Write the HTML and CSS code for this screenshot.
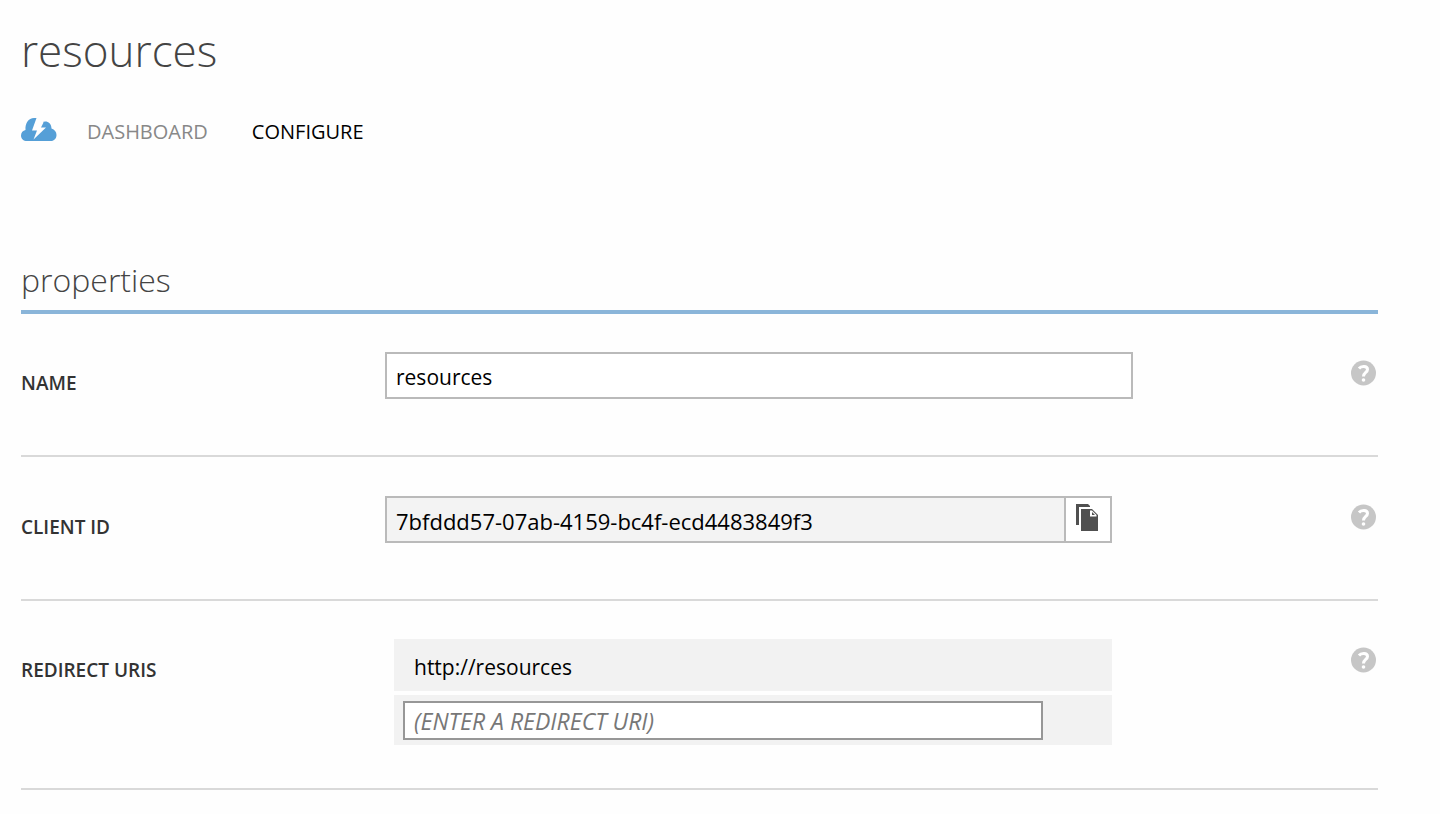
FILE: index.html
```html
<!DOCTYPE html>
<html lang="en">
<head>
    <meta charset="UTF-8">
    <meta name="viewport" content="width=device-width, initial-scale=1.0">
    <title>resources</title>
    <link rel="stylesheet" href="styles.css">
</head>
<body>
    <header>
        <h1>resources</h1>
        <nav class="tabs">
            <a href="#" class="cloud" aria-label="Quick start">
                <svg width="36" height="24" viewBox="0 0 36 24">
                    <path fill="#559fd7" d="M6 23C2.500 23 0 21 0 17.500C0 14.500 2 12.500 4.500 12C4 5 7.500 0 13 0H17.500L19 8L21 4.500C24.500 2 30.500 4 30.500 10.500C33.500 11.500 35.500 14 35.500 17C35.500 20.500 33 23 30 23Z"/>
                    <path fill="#fefefe" d="M15.500 0L11 12.500H16L12.500 21.500L25 9.500H20L22.500 4.500L19 0Z"/>
                </svg>
            </a>
            <a href="#">DASHBOARD</a>
            <a href="#" class="active">CONFIGURE</a>
        </nav>
    </header>

    <main>
        <h2>properties</h2>
        <form>
            <div class="row">
                <label for="name">NAME</label>
                <input type="text" id="name" class="text-box" value="resources">
                <button type="button" class="help" aria-label="Help">
                    <svg width="26" height="26" viewBox="0 0 26 26">
                        <circle cx="12.500" cy="13" r="12.500" fill="#c6c6c6"/>
                        <path d="M8 8.500C10 6 16.500 5.500 16.500 9.500C16.500 12.500 12.500 12.500 12.500 16.500" fill="none" stroke="#fff" stroke-width="3"/>
                        <circle cx="12.500" cy="20" r="1.800" fill="#fff"/>
                    </svg>
                </button>
            </div>

            <div class="row">
                <label for="clientId">CLIENT ID</label>
                <div class="copy-box">
                    <input type="text" id="clientId" class="text-box" value="7bfddd57-07ab-4159-bc4f-ecd4483849f3" readonly>
                    <button type="button" class="copy-btn" aria-label="Copy">
                        <svg width="22" height="27" viewBox="0 0 22 27">
                            <path fill="#505050" d="M0 0H12L14 2V3H3V21H0Z"/>
                            <path fill="#505050" d="M5 5H16L22 11V27H5Z"/>
                            <path fill="#fff" d="M14 6.500H16L20.500 11V12.500H14Z"/>
                            <path fill="#505050" d="M16 8L19 11H16Z"/>
                        </svg>
                    </button>
                </div>
                <button type="button" class="help" aria-label="Help">
                    <svg width="26" height="26" viewBox="0 0 26 26">
                        <circle cx="12.500" cy="13" r="12.500" fill="#c6c6c6"/>
                        <path d="M8 8.500C10 6 16.500 5.500 16.500 9.500C16.500 12.500 12.500 12.500 12.500 16.500" fill="none" stroke="#fff" stroke-width="3"/>
                        <circle cx="12.500" cy="20" r="1.800" fill="#fff"/>
                    </svg>
                </button>
            </div>

            <div class="row last">
                <label for="redirectUri">REDIRECT URIS</label>
                <ul class="uri-list">
                    <li class="uri">http://resources</li>
                    <li class="new-uri"><input type="text" id="redirectUri" placeholder="(ENTER A REDIRECT URI)"></li>
                </ul>
                <button type="button" class="help" aria-label="Help">
                    <svg width="26" height="26" viewBox="0 0 26 26">
                        <circle cx="12.500" cy="13" r="12.500" fill="#c6c6c6"/>
                        <path d="M8 8.500C10 6 16.500 5.500 16.500 9.500C16.500 12.500 12.500 12.500 12.500 16.500" fill="none" stroke="#fff" stroke-width="3"/>
                        <circle cx="12.500" cy="20" r="1.800" fill="#fff"/>
                    </svg>
                </button>
            </div>
        </form>
    </main>
</body>
</html>
```
FILE: styles.css
```css
* {
    box-sizing: border-box;
}

body {
    margin: 0;
    padding: 16px 62px 24px 21px;
    font-family: "Open Sans", "Noto Sans", sans-serif;
    background: #fefefe;
    color: #333;
}

h1, h2 {
    margin: 0;
    font-weight: 300;
    color: #444;
}

h1 {
    font-size: 44px;
    line-height: 68px;
}

h2 {
    padding-bottom: 4px;
    font-size: 32px;
    line-height: 52px;
    border-bottom: 4px solid #8ab5d9;
}

.tabs {
    display: flex;
    align-items: center;
    margin: 32px 0 108px;
    height: 30px;
    font-size: 20px;
}

.tabs a {
    margin-right: 44px;
    color: #888;
    text-decoration: none;
}

.tabs a.active {
    color: #000;
}

.tabs a.cloud {
    display: flex;
    margin-right: 30px;
    padding-bottom: 2px;
}

.row {
    display: grid;
    grid-template-columns: 364px 1fr 27px;
    align-items: start;
    padding: 38px 0 56px;
    border-bottom: 2px solid #d9d9d9;
}

.row + .row {
    padding-top: 39px;
}

.row.last {
    padding-top: 38px;
    padding-bottom: 43px;
}

label {
    padding-top: 18px;
    font-size: 19px;
    font-weight: 600;
    line-height: 26px;
}

input {
    font-family: inherit;
    font-size: 21px;
    color: #000;
    outline: none;
}

.text-box {
    width: 100%;
    max-width: 748px;
    height: 47px;
    padding: 2px 9px 0;
    border: 2px solid #bababa;
    background: #fff;
}

.copy-box {
    display: flex;
    max-width: 727px;
}

.copy-box .text-box {
    font-size: 22px;
    border-right: 0;
    background: #f3f3f3;
}

.copy-btn {
    display: flex;
    align-items: center;
    justify-content: center;
    flex: 0 0 48px;
    padding: 0 2px 4px 0;
    border: 2px solid #bababa;
    background: #fff;
    cursor: pointer;
}

.help {
    margin-top: 8px;
    padding: 0;
    height: 26px;
    border: 0;
    background: none;
    cursor: pointer;
    text-align: left;
}

.uri-list {
    display: grid;
    gap: 4px;
    max-width: 727px;
    margin: 0;
    padding: 0 0 0 9px;
    list-style: none;
}

.uri {
    padding: 13px 20px 9px;
    font-size: 21px;
    line-height: 30px;
    color: #000;
    background: #f2f2f2;
}

.new-uri {
    display: flex;
    padding: 6px 69px 5px 9px;
    background: #f2f2f2;
}

.new-uri input {
    width: 100%;
    height: 39px;
    padding: 0 9px;
    font-size: 23px;
    border: 2px solid #979797;
    background: #fff;
}

.new-uri input::placeholder {
    color: #777;
    font-style: italic;
    opacity: 1;
}
```
